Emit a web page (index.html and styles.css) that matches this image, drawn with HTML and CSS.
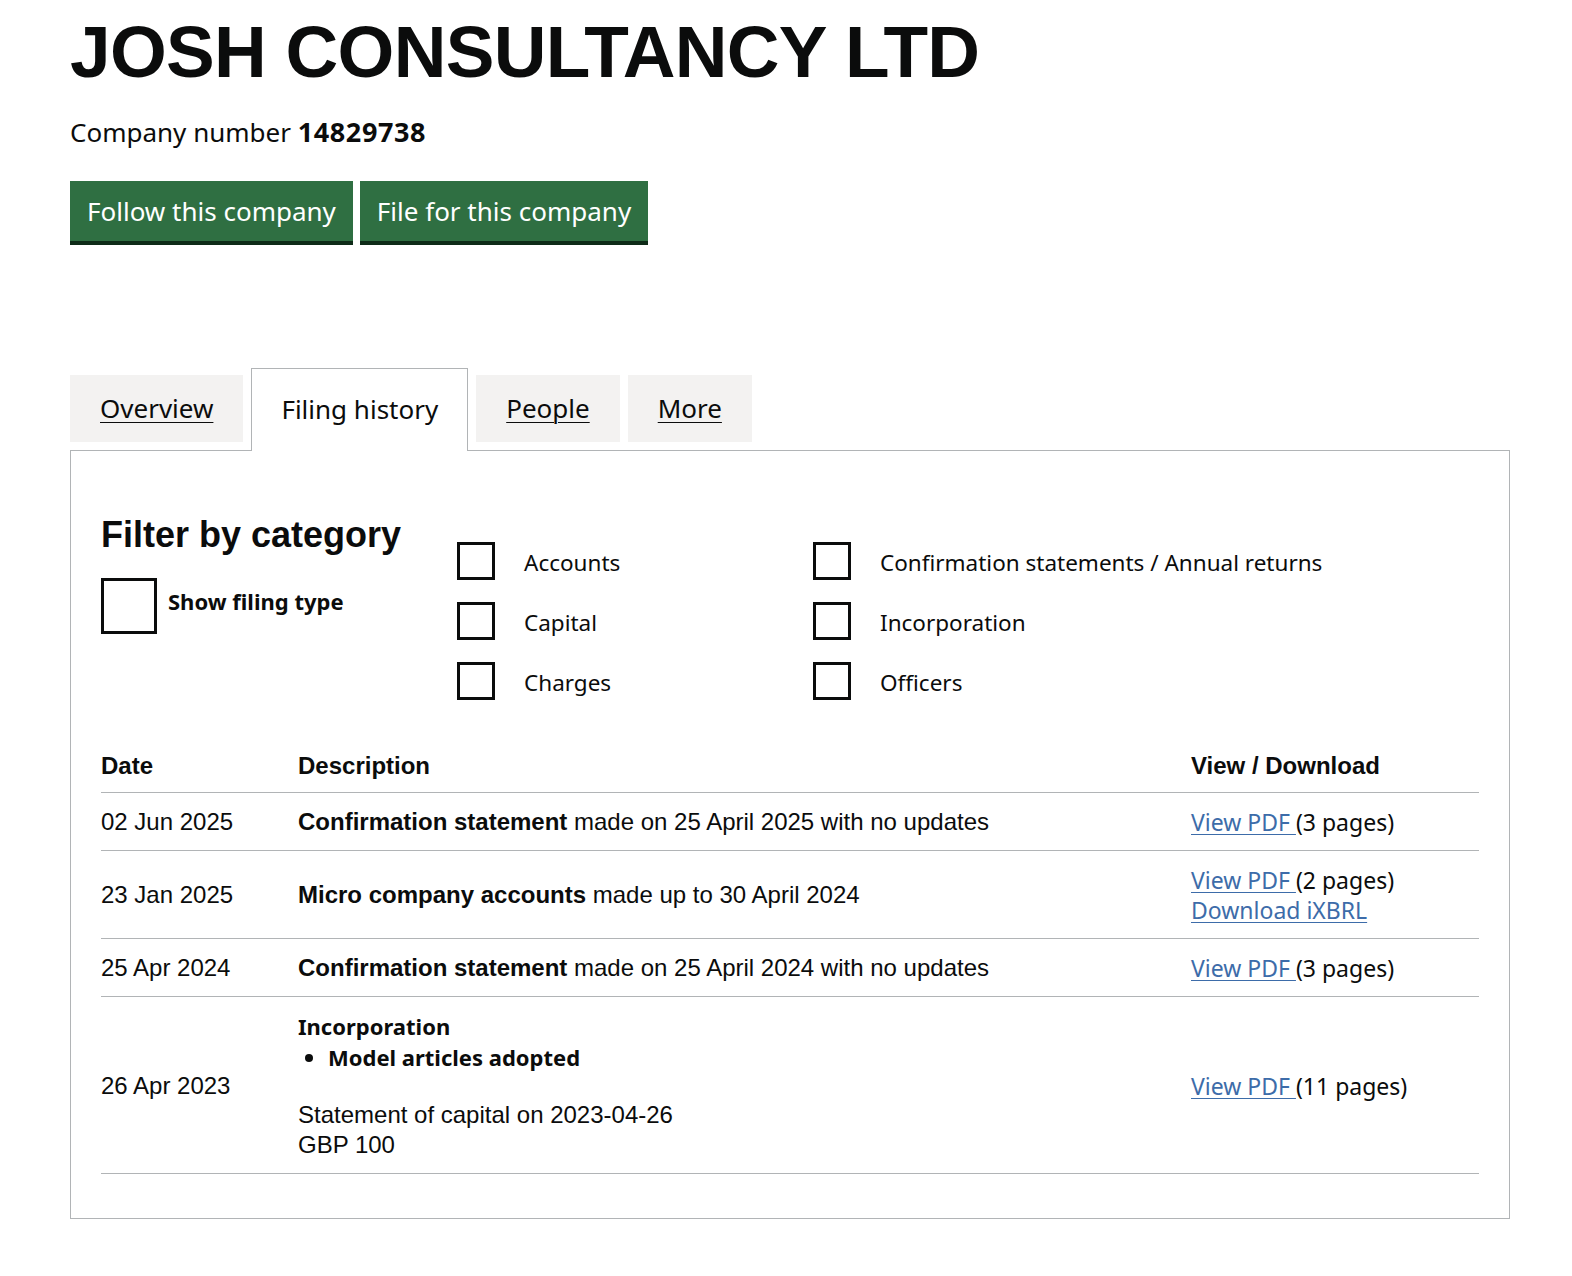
FILE: index.html
```html
<!DOCTYPE html>
<html lang="en">
<head>
    <meta charset="UTF-8">
    <meta name="viewport" content="width=device-width, initial-scale=1.0">
    <title>JOSH CONSULTANCY LTD - Filing history</title>
    <link rel="stylesheet" href="styles.css">
</head>
<body>
    <div class="container">
        <div class="company-header">
            <h1>JOSH CONSULTANCY LTD</h1>
            <p class="company-number">Company number <strong>14829738</strong></p>
            <div class="actions">
                <a class="button" href="#">Follow this company</a>
                <a class="button" href="#">File for this company</a>
            </div>
        </div>

        <ul class="tabs">
            <li class="tab"><a href="#">Overview</a></li>
            <li class="tab active"><span>Filing history</span></li>
            <li class="tab"><a href="#">People</a></li>
            <li class="tab"><a href="#">More</a></li>
        </ul>

        <div class="panel">
            <div class="filters">
                <div class="filter-intro">
                    <h2>Filter by category</h2>
                    <label class="show-type">
                        <input type="checkbox" class="check large">
                        <span>Show filing type</span>
                    </label>
                </div>
                <div class="filter-list">
                    <label class="option"><input type="checkbox" class="check"><span>Accounts</span></label>
                    <label class="option"><input type="checkbox" class="check"><span>Capital</span></label>
                    <label class="option"><input type="checkbox" class="check"><span>Charges</span></label>
                </div>
                <div class="filter-list">
                    <label class="option"><input type="checkbox" class="check"><span>Confirmation statements / Annual returns</span></label>
                    <label class="option"><input type="checkbox" class="check"><span>Incorporation</span></label>
                    <label class="option"><input type="checkbox" class="check"><span>Officers</span></label>
                </div>
            </div>

            <table class="filings">
                <colgroup>
                    <col class="col-date">
                    <col>
                    <col class="col-view">
                </colgroup>
                <thead>
                    <tr>
                        <th>Date</th>
                        <th>Description</th>
                        <th>View / Download</th>
                    </tr>
                </thead>
                <tbody>
                    <tr>
                        <td>02 Jun 2025</td>
                        <td><strong>Confirmation statement</strong> made on 25 April 2025 with no updates</td>
                        <td class="download"><a href="#">View PDF </a>(3 pages)</td>
                    </tr>
                    <tr>
                        <td>23 Jan 2025</td>
                        <td><strong>Micro company accounts</strong> made up to 30 April 2024</td>
                        <td class="download"><a href="#">View PDF </a>(2 pages)<br><a href="#">Download iXBRL</a></td>
                    </tr>
                    <tr>
                        <td>25 Apr 2024</td>
                        <td><strong>Confirmation statement</strong> made on 25 April 2024 with no updates</td>
                        <td class="download"><a href="#">View PDF </a>(3 pages)</td>
                    </tr>
                    <tr>
                        <td>26 Apr 2023</td>
                        <td>
                            <strong class="type-label">Incorporation</strong>
                            <ul class="resolutions">
                                <li>Model articles adopted</li>
                            </ul>
                            <p class="capital">Statement of capital on 2023-04-26<br>GBP 100</p>
                        </td>
                        <td class="download"><a href="#">View PDF </a>(11 pages)</td>
                    </tr>
                </tbody>
            </table>
        </div>
    </div>
</body>
</html>
```

FILE: styles.css
```css
body {
    font-family: "Liberation Sans", Arial, sans-serif;
    color: #0b0c0c;
    background-color: #fff;
    margin: 0;
    padding: 0;
}
.container {
    width: 1440px;
    margin: 0 70px;
    padding-top: 15px;
}
.company-header h1 {
    font-size: 73px;
    line-height: 1;
    letter-spacing: -0.7px;
    font-weight: bold;
    margin: 0;
}
.company-number {
    font-family: "Noto Sans", sans-serif;
    font-size: 26px;
    line-height: 39px;
    margin: 24px 0 0;
}
.company-number strong {
    font-weight: bold;
    font-size: 27px;
    letter-spacing: 0.6px;
}
.actions {
    display: flex;
    gap: 7px;
    margin-top: 29px;
}
.button {
    font-family: "Noto Sans", sans-serif;
    font-size: 26px;
    line-height: 32px;
    padding: 14px 17px;
    color: #fff;
    background-color: #2f6f42;
    box-shadow: 0 4px 0 #0e2b18;
    text-decoration: none;
}

/* tabs */
.tabs {
    list-style: none;
    display: flex;
    align-items: flex-end;
    gap: 8px;
    margin: 127px 0 0;
    padding: 0;
}
.tab {
    font-family: "Noto Sans", sans-serif;
    font-size: 26px;
    line-height: 39px;
    padding: 14px 30px;
    margin-bottom: 8px;
    background-color: #f3f2f1;
}
.tab a {
    color: #0b0c0c;
    text-decoration: underline;
    text-decoration-thickness: 1px;
    text-underline-offset: 4px;
}
.tab.active {
    position: relative;
    z-index: 1;
    background-color: #fff;
    border: 1px solid #b1b4b6;
    border-bottom: none;
    padding: 21px 29px 22px;
    margin-bottom: -1px;
}
.panel {
    border: 1px solid #b1b4b6;
    padding: 0 30px 30px;
}

/* filters */
.filters {
    display: grid;
    grid-template-columns: 356px 356px 1fr;
    padding-top: 61px;
}
.filter-intro h2 {
    font-size: 36px;
    line-height: 45px;
    margin: 0;
}
.show-type {
    display: flex;
    align-items: flex-start;
    gap: 11px;
    margin-top: 21px;
    font-family: "Noto Sans", sans-serif;
    font-weight: bold;
    font-size: 22px;
    line-height: 39px;
}
.show-type span {
    padding-top: 4px;
}
.check {
    appearance: none;
    -webkit-appearance: none;
    width: 38px;
    height: 38px;
    border: 3px solid #0b0c0c;
    margin: 0;
    flex: none;
    background: #fff;
}
.check.large {
    width: 56px;
    height: 56px;
}
.filter-list {
    display: flex;
    flex-direction: column;
    gap: 22px;
    margin-top: 30px;
}
.option {
    display: flex;
    align-items: center;
    gap: 29px;
    font-family: "Noto Sans", sans-serif;
    font-size: 22.5px;
    line-height: 30px;
}
.option span {
    padding-top: 3px;
}

/* filing table */
.filings {
    width: 100%;
    table-layout: fixed;
    border-collapse: collapse;
    margin-top: 37px;
    margin-bottom: 14px;
    font-size: 24px;
    line-height: 30px;
}
.col-date {
    width: 197px;
}
.col-view {
    width: 288px;
}
.filings th {
    text-align: left;
    font-weight: bold;
    padding: 14px 0 11px;
    border-bottom: 1px solid #b1b4b6;
}
.filings td {
    padding: 14px 0 13px;
    vertical-align: middle;
    border-bottom: 1px solid #b1b4b6;
}
.filings .download {
    font-family: "Noto Sans", sans-serif;
    font-size: 23px;
}
.download a {
    color: #3d6ca9;
    text-decoration: underline;
    text-decoration-thickness: 1px;
    text-underline-offset: 3px;
}
.type-label {
    font-family: "Noto Sans", sans-serif;
    font-size: 22px;
}
.resolutions {
    margin: 0;
    padding-left: 30px;
    font-family: "Noto Sans", sans-serif;
    font-size: 22px;
    font-weight: bold;
}
.capital {
    margin: 28px 0 0;
}
```
